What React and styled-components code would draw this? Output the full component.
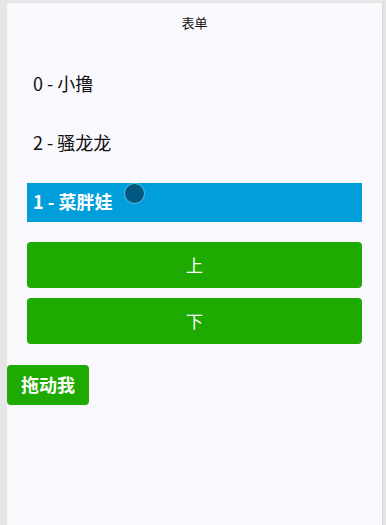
import React, { useState } from 'react';
import styled, { createGlobalStyle } from 'styled-components';

const GlobalStyle = createGlobalStyle`
  html, body {
    margin: 0;
    padding: 0;
    background-color: #e6e6e6;
    font-family: "Noto Sans CJK SC", "Noto Sans", sans-serif;
  }
`;

const Page = styled.div`
  margin: 3px 4px 0 7px;
  min-height: 522px;
  background-color: #f9f8fd;
  box-shadow: 1px 0 1px rgba(0, 0, 0, 0.06);
`;

const Title = styled.div`
  height: 42px;
  line-height: 40px;
  text-align: center;
  font-size: 13px;
  color: #111;
`;

const List = styled.div`
  display: flex;
  flex-direction: column;
  gap: 20px;
  padding: 20px 20px 0;
`;

const Item = styled.div`
  position: relative;
  box-sizing: border-box;
  height: 39px;
  display: flex;
  align-items: center;
  padding: 0 0 3px 6px;
  font-size: 18px;
  font-weight: ${(p) => (p.$active ? 700 : 400)};
  color: ${(p) => (p.$active ? '#fff' : '#111')};
  background-color: ${(p) => (p.$active ? '#009edb' : 'transparent')};
`;

const Touch = styled.span`
  position: absolute;
  left: 97px;
  top: 0;
  width: 19px;
  height: 19px;
  border-radius: 50%;
  background-color: #02587f;
  border: 1.5px solid #62bfe6;
`;

const Buttons = styled.div`
  display: flex;
  flex-direction: column;
  gap: 10px;
  padding: 20px 20px 0;
`;

const Button = styled.button`
  height: 46px;
  border: none;
  border-radius: 4px;
  background-color: #1eaa00;
  color: #fff;
  font-family: inherit;
  font-size: 17px;
  padding: 0 0 2px;
  cursor: pointer;
`;

const DragButton = styled.button`
  margin-top: 21px;
  width: 82px;
  height: 40px;
  border: none;
  border-radius: 4px;
  background-color: #1eaa00;
  color: #fff;
  font-family: inherit;
  font-size: 18px;
  font-weight: 700;
  padding: 0 0 2px;
  cursor: grab;
`;

const App = () => {
  const [items, setItems] = useState([
    { id: 0, name: '小撸' },
    { id: 2, name: '骚龙龙' },
    { id: 1, name: '菜胖娃' },
  ]);
  const [selected, setSelected] = useState(2);

  const move = (dir) => {
    const next = selected + dir;
    if (next < 0 || next >= items.length) return;
    const copy = [...items];
    [copy[selected], copy[next]] = [copy[next], copy[selected]];
    setItems(copy);
    setSelected(next);
  };

  return (
    <>
      <GlobalStyle />
      <Page>
        <Title>表单</Title>
        <List>
          {items.map((item, i) => (
            <Item key={item.id} $active={i === selected} onClick={() => setSelected(i)}>
              {item.id} - {item.name}
              {i === selected && <Touch />}
            </Item>
          ))}
        </List>
        <Buttons>
          <Button onClick={() => move(-1)}>上</Button>
          <Button onClick={() => move(1)}>下</Button>
        </Buttons>
        <DragButton>拖动我</DragButton>
      </Page>
    </>
  );
};

export default App;
